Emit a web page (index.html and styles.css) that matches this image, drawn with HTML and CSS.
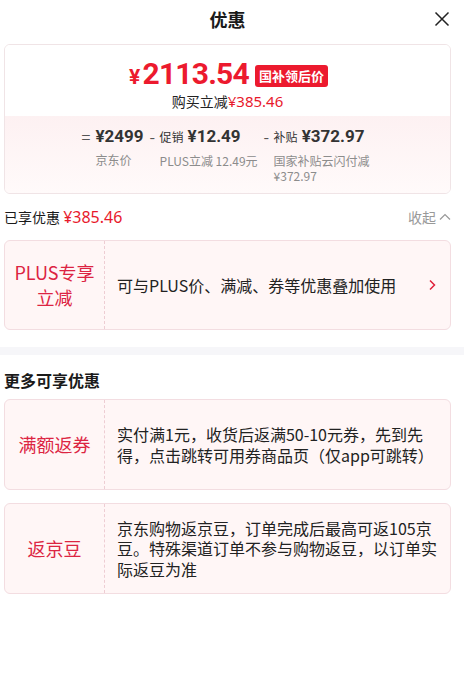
FILE: index.html
```html
<!DOCTYPE html>
<html lang="zh-CN">
<head>
<meta charset="utf-8">
<title>优惠</title>
<link rel="stylesheet" href="styles.css">
</head>
<body>
<div class="page">
  <header class="header">
    <h1 class="title">优惠</h1>
    <button class="close" aria-label="关闭">
      <svg width="16" height="16" viewBox="0 0 16 16"><path d="M1.5 1.5 L14.5 14.5 M14.5 1.5 L1.5 14.5" stroke="#222" stroke-width="1.5" fill="none"/></svg>
    </button>
  </header>

  <section class="summary">
    <div class="summary-top">
      <div class="price-line">
        <span class="price"><span class="yen">¥</span>2113.54</span>
        <span class="tag">国补领后价</span>
      </div>
      <div class="sub-line">购买立减<span class="red">¥385.46</span></div>
    </div>
    <div class="summary-bottom">
      <div class="calc">
        <div class="col">
          <span class="op op-eq">=</span>
          <div class="col-body">
            <div class="val">¥2499</div>
            <div class="lbl">京东价</div>
          </div>
        </div>
        <div class="col">
          <span class="op">-</span>
          <div class="col-body">
            <div class="val"><span class="small">促销</span>¥12.49</div>
            <div class="lbl">PLUS立减 12.49元</div>
          </div>
        </div>
        <div class="col col-wide">
          <span class="op">-</span>
          <div class="col-body">
            <div class="val"><span class="small">补贴</span>¥372.97</div>
            <div class="lbl lbl-narrow">国家补贴云闪付减 ¥372.97</div>
          </div>
        </div>
      </div>
    </div>
  </section>

  <div class="enjoyed">
    <div class="enjoyed-left">已享优惠 <span class="red">¥385.46</span></div>
    <div class="collapse">收起
      <svg width="12" height="8" viewBox="0 0 12 8"><path d="M1 6.5 L6 1.5 L11 6.5" stroke="#999" stroke-width="1.2" fill="none"/></svg>
    </div>
  </div>

  <div class="coupon">
    <div class="coupon-left">PLUS专享<br>立减</div>
    <div class="coupon-right coupon-link">
      <span>可与PLUS价、满减、券等优惠叠加使用</span>
      <svg class="chev" width="8" height="12" viewBox="0 0 8 12"><path d="M2 1.5 L6.5 6 L2 10.5" stroke="#e0203a" stroke-width="1.5" fill="none"/></svg>
    </div>
  </div>

  <div class="band"></div>

  <h2 class="section-title">更多可享优惠</h2>

  <div class="coupon tall">
    <div class="coupon-left">满额返券</div>
    <div class="coupon-right">
      <p class="desc">实付满1元，收货后返满50-10元券，先到先得，点击跳转可用券商品页（仅app可跳转）</p>
    </div>
  </div>

  <div class="coupon tall">
    <div class="coupon-left">返京豆</div>
    <div class="coupon-right">
      <p class="desc">京东购物返京豆，订单完成后最高可返105京豆。特殊渠道订单不参与购物返豆，以订单实际返豆为准</p>
    </div>
  </div>
</div>
</body>
</html>
```

FILE: styles.css
```css
* { box-sizing: border-box; }
html, body { margin: 0; padding: 0; background: #fff; }
body {
  font-family: "Noto Sans CJK SC", "Noto Sans", sans-serif;
  color: #1a1a1a;
  width: 464px;
}
.page {
  width: 447px;
  margin-left: 4px;
}
.header {
  height: 44px;
  display: flex;
  align-items: flex-start;
  justify-content: center;
  position: relative;
}
.title {
  margin: 0;
  font-size: 18px;
  font-weight: 700;
  line-height: 38px;
}
.close {
  position: absolute;
  right: 1px;
  top: 11px;
  border: 0;
  background: none;
  padding: 0;
  width: 16px;
  height: 16px;
}
.red { color: #e8192c; }

.summary {
  border: 1px solid #f0e4e6;
  border-radius: 6px;
  overflow: hidden;
}
.summary-top {
  padding: 14px 0 5px;
  text-align: center;
  background: #fff;
}
.price-line {
  display: flex;
  align-items: center;
  justify-content: center;
  height: 32px;
  gap: 6px;
  padding-left: 2px;
}
.price {
  font-family: "Roboto", "Liberation Sans", sans-serif;
  font-weight: 700;
  font-size: 30px;
  letter-spacing: -0.8px;
  color: #ec1a2e;
  line-height: 32px;
}
.yen { font-size: 21px; margin-right: 3px; }
.tag {
  background: #ec1a2e;
  color: #fff;
  font-weight: 700;
  font-size: 13px;
  line-height: 22px;
  height: 22px;
  padding: 0 4px;
  border-radius: 3px;
  margin-top: 2px;
}
.sub-line {
  font-size: 14px;
  line-height: 20px;
  color: #222;
}
.sub-line .red { font-family: "Noto Sans", sans-serif; font-size: 15px; }

.summary-bottom {
  background: linear-gradient(to bottom, #fdf1f2, #fffafa);
  padding: 8px 0 10px;
}
.calc {
  display: flex;
  justify-content: center;
  gap: 6px;
}
.col {
  display: flex;
  align-items: flex-start;
}
.op {
  font-size: 16px;
  line-height: 24px;
  color: #555;
  width: 10px;
}
.op-eq { width: 14px; }
.col-body { display: flex; flex-direction: column; }
.val {
  font-family: "Roboto", "Liberation Sans", sans-serif;
  font-weight: 700;
  font-size: 17px;
  line-height: 24px;
  color: #333;
  white-space: nowrap;
}
.small {
  font-family: "Noto Sans CJK SC", sans-serif;
  font-weight: 400;
  font-size: 12px;
  margin-right: 4px;
  color: #333;
}
.lbl {
  margin-top: 4px;
  font-size: 12px;
  line-height: 15px;
  color: #8c8c8c;
  white-space: nowrap;
}
.lbl-narrow {
  white-space: normal;
  width: 100px;
}

.enjoyed {
  height: 46px;
  display: flex;
  align-items: center;
  justify-content: space-between;
}
.enjoyed-left { font-size: 14px; color: #1a1a1a; }
.enjoyed-left .red { font-family: "Noto Sans", sans-serif; font-size: 16px; }
.collapse {
  font-size: 14px;
  color: #999;
  display: flex;
  align-items: center;
  gap: 3px;
}

.coupon {
  display: flex;
  min-height: 90px;
  border: 1px solid #f3dde1;
  border-radius: 6px;
  background: #fff6f6;
}
.coupon-left {
  width: 100px;
  flex: none;
  border-right: 1px dashed #eecdd3;
  display: flex;
  align-items: center;
  justify-content: center;
  text-align: center;
  color: #dc2442;
  font-size: 18px;
  line-height: 25px;
}
.coupon-right {
  flex: 1;
  display: flex;
  align-items: center;
  padding: 0 11px 0 12px;
  font-size: 16px;
  color: #222;
}
.coupon-link {
  justify-content: space-between;
  padding-right: 14px;
}
.desc {
  margin: 0;
  line-height: 20.5px;
  width: 322px;
}
.band {
  height: 8px;
  margin: 17px -4px 0;
  width: 464px;
  background: #f6f6f9;
}
.section-title {
  margin: 13px 0 7px;
  font-size: 16px;
  font-weight: 700;
  line-height: 24px;
}
.tall { min-height: 91px; margin-bottom: 13px; }
```
